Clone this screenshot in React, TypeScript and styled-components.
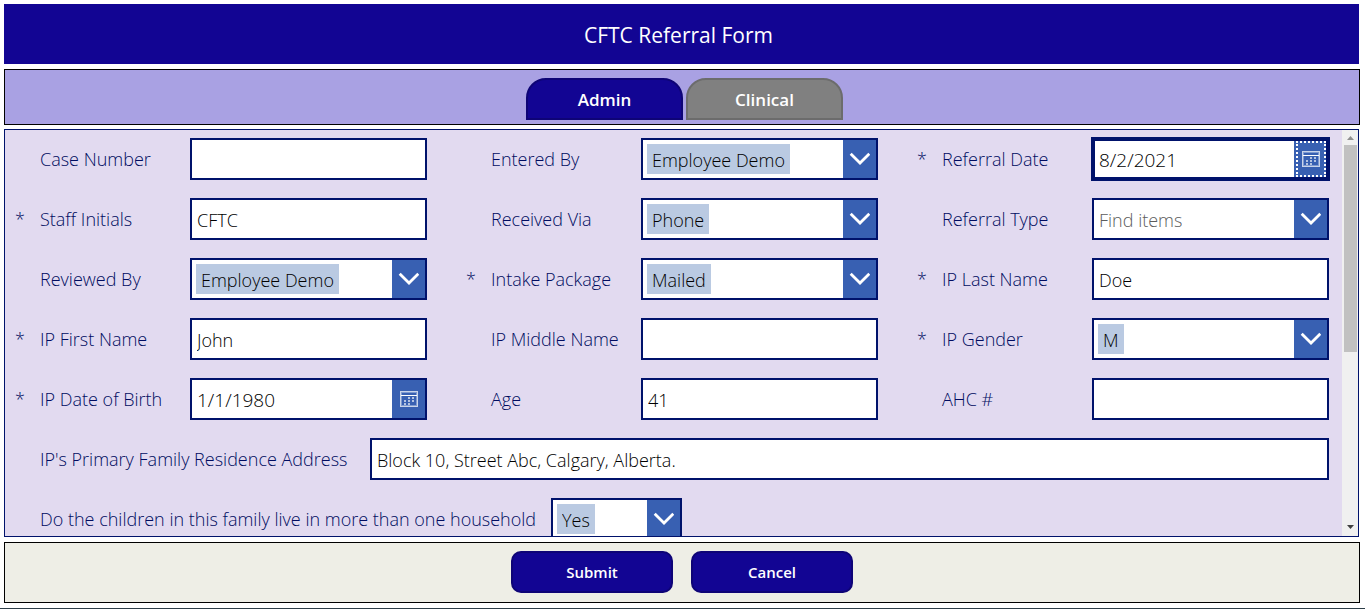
import React, { useId, useRef, useState } from "react";
import styled, { createGlobalStyle, css } from "styled-components";

const colors = {
  brand: "#120593",
  brandEdge: "#0e0476",
  navy: "#00126b",
  label: "#000c60",
  blue: "#3860b2",
  chip: "#bacae2",
  lavender: "#a9a1e3",
  panel: "#e2daf0",
  cream: "#eeeee6",
};

const GlobalStyle = createGlobalStyle`
  *, *::before, *::after { box-sizing: border-box; }
  body {
    margin: 0;
    background: #fff;
    font-family: "Open Sans", sans-serif;
  }
  button, input, select { font-family: inherit; }
`;

const Page = styled.div`
  display: flex;
  flex-direction: column;
  height: 100vh;
  padding-top: 4px;
  border-bottom: 1px solid #2c3d47;
`;

const Header = styled.header`
  flex: none;
  display: flex;
  align-items: center;
  justify-content: center;
  height: 60px;
  margin: 0 6px 5px 4px;
  padding: 2px 6px 0 0;
  background: ${colors.brand};
`;

const Title = styled.h1`
  margin: 0;
  color: #fff;
  font-size: 21px;
  font-weight: 400;
  line-height: 28px;
`;

const TabBar = styled.nav`
  flex: none;
  display: flex;
  justify-content: center;
  gap: 3px;
  height: 56px;
  margin: 0 5px 4px 4px;
  padding: 8px 0 0 5px;
  border: 1px solid #000;
  background: ${colors.lavender};
`;

const Tab = styled.button<{ $active: boolean }>`
  width: 157px;
  height: 42px;
  padding: 2px 0 0;
  border: 2px solid ${(p) => (p.$active ? colors.brandEdge : "#6c6c6c")};
  border-radius: 20px 20px 0 0;
  background: ${(p) => (p.$active ? colors.brand : "#808080")};
  color: #fff;
  font-size: 17px;
  font-weight: 600;
  line-height: 24px;
  cursor: pointer;
`;

const Panel = styled.main`
  flex: 1;
  display: flex;
  min-height: 0;
  margin: 0 6px 5px 4px;
  border: 1px solid ${colors.navy};
  background: ${colors.panel};
`;

const ScrollArea = styled.div`
  flex: 1;
  min-width: 0;
  overflow-y: auto;
  scrollbar-width: none;
`;

const Grid = styled.div`
  display: grid;
  grid-template-columns: repeat(3, minmax(0, 1fr));
  gap: 18px 39px;
  padding: 8px 13px 190px 10px;
`;

const Row = styled.div<{ $wide?: boolean }>`
  display: flex;
  align-items: center;
  height: 42px;
  ${(p) => p.$wide && css`grid-column: 1 / -1;`}
`;

const Star = styled.span`
  flex: none;
  width: 25px;
  color: ${colors.label};
  font-size: 18px;
  font-weight: 300;
  line-height: 24px;
`;

const Label = styled.label<{ $width: number }>`
  flex: none;
  width: ${(p) => p.$width}px;
  color: ${colors.label};
  font-size: 18px;
  font-weight: 300;
  line-height: 24px;
  white-space: nowrap;
`;

const Box = styled.div<{ $width?: number; $focused?: boolean }>`
  flex: ${(p) => (p.$width ? "none" : "1")};
  display: flex;
  align-items: center;
  min-width: 0;
  width: ${(p) => (p.$width ? `${p.$width}px` : "auto")};
  height: 42px;
  border: 2px solid ${colors.navy};
  background: #fff;
  ${(p) =>
    p.$focused &&
    css`
      border-width: 3px;
      box-shadow: 0 0 0 1px ${colors.navy};
    `}
`;

const TextInput = styled.input<{ $date?: boolean; $focused?: boolean }>`
  flex: 1;
  min-width: 0;
  height: 100%;
  padding: 2px ${(p) => (p.$focused ? 4 : 5)}px 0;
  border: 0;
  outline: 0;
  background: transparent;
  color: #000;
  font-size: ${(p) => (p.$date ? 19 : 18)}px;
  font-weight: 300;
`;

const SelectSlot = styled.div`
  flex: 1;
  display: flex;
  min-width: 0;
  padding-left: 4px;
`;

const Select = styled.select<{ $empty: boolean }>`
  appearance: none;
  field-sizing: content;
  height: 30px;
  padding: 2px ${(p) => (p.$empty ? 1 : 5)}px 0;
  border: 0;
  border-radius: 0;
  outline: 0;
  background: ${(p) => (p.$empty ? "transparent" : colors.chip)};
  color: ${(p) => (p.$empty ? "#5c5c5c" : "#000")};
  font-size: 18px;
  font-weight: 300;
`;

const Arrow = styled.span`
  flex: none;
  display: flex;
  align-items: center;
  justify-content: center;
  align-self: stretch;
  width: 33px;
  background: ${colors.blue};
  pointer-events: none;
`;

const CalendarButton = styled.button<{ $focused?: boolean }>`
  flex: none;
  display: flex;
  align-items: center;
  justify-content: center;
  align-self: stretch;
  width: 33px;
  padding: 0;
  border: 0;
  background: ${colors.blue};
  ${(p) =>
    p.$focused &&
    css`
      width: 30px;
      margin: 0 0 0 2px;
      border: 2px dotted #fff;
      box-shadow: -2px 0 0 ${colors.blue};
    `}
`;

const ScrollBar = styled.div`
  flex: none;
  display: flex;
  flex-direction: column;
  width: 16px;
  background: #f0f0f0;
`;

const ScrollButton = styled.button`
  flex: none;
  display: flex;
  align-items: center;
  justify-content: center;
  height: 15px;
  padding: 0;
  border: 0;
  background: transparent;
`;

const Track = styled.div`
  flex: 1;
  padding: 0 1px 0 2px;
`;

const Thumb = styled.div`
  height: 55%;
  background: #c1c1c1;
`;

const Footer = styled.footer`
  flex: none;
  display: flex;
  justify-content: center;
  gap: 18px;
  height: 61px;
  margin: 0 5px 5px 4px;
  padding-top: 8px;
  border: 1px solid #000;
  background: ${colors.cream};
`;

const ActionButton = styled.button`
  width: 162px;
  height: 42px;
  padding: 0;
  border: 2px solid ${colors.brandEdge};
  border-radius: 10px;
  background: ${colors.brand};
  color: #fff;
  font-size: 15px;
  font-weight: 600;
  line-height: 20px;
  cursor: pointer;
`;

const Chevron = () => (
  <svg width="21" height="14" viewBox="0 0 21 14" fill="none" aria-hidden="true">
    <path d="M1.7 1.7 11 11 20.3 1.7" stroke="#fff" strokeWidth="2.8" />
  </svg>
);

const CalendarIcon = () => (
  <svg width="18" height="16" viewBox="0 0 18 16" shapeRendering="crispEdges" aria-hidden="true">
    <path d="M0 0h18v16H0zM2 2v2h14V2zM2 6v8h14V6z" fill="#7f9ad0" fillRule="evenodd" />
    <path d="M0 0h18v16H0zM1 1v14h16V1z" fill="#c9d4ea" fillRule="evenodd" />
    <path d="M1 4h16v1H1z" fill="#fff" />
    <path d="M2 5h14v1H2z" fill={colors.blue} />
    <path
      d="M8 6h2v2H8zM12 6h2v2h-2zM4 9h2v2H4zM8 9h2v2H8zM12 9h2v2h-2zM4 12h2v2H4zM8 12h2v2H8z"
      fill="#b4c3e1"
    />
  </svg>
);

type FieldProps = {
  label: string;
  kind?: "text" | "date" | "select";
  value?: string;
  required?: boolean;
  focused?: boolean;
  wide?: boolean;
  labelWidth?: number;
  boxWidth?: number;
};

function Field({
  label,
  kind = "text",
  value = "",
  required,
  focused,
  wide,
  labelWidth = 150,
  boxWidth,
}: FieldProps) {
  const id = useId();
  return (
    <Row $wide={wide}>
      <Star aria-hidden="true">{required ? "*" : ""}</Star>
      <Label htmlFor={id} $width={labelWidth}>
        {label}
      </Label>
      <Box $width={boxWidth} $focused={focused}>
        {kind === "select" ? (
          <>
            <SelectSlot>
              <Select id={id} $empty={!value} defaultValue={value}>
                <option value={value}>{value || "Find items"}</option>
              </Select>
            </SelectSlot>
            <Arrow>
              <Chevron />
            </Arrow>
          </>
        ) : (
          <TextInput
            id={id}
            type="text"
            defaultValue={value}
            required={required}
            $date={kind === "date"}
            $focused={focused}
          />
        )}
        {kind === "date" && (
          <CalendarButton type="button" aria-label={`Pick ${label}`} $focused={focused}>
            <CalendarIcon />
          </CalendarButton>
        )}
      </Box>
    </Row>
  );
}

const fields: FieldProps[] = [
  { label: "Case Number" },
  { label: "Entered By", kind: "select", value: "Employee Demo" },
  { label: "Referral Date", kind: "date", value: "8/2/2021", required: true, focused: true },
  { label: "Staff Initials", value: "CFTC", required: true },
  { label: "Received Via", kind: "select", value: "Phone" },
  { label: "Referral Type", kind: "select" },
  { label: "Reviewed By", kind: "select", value: "Employee Demo" },
  { label: "Intake Package", kind: "select", value: "Mailed", required: true },
  { label: "IP Last Name", value: "Doe", required: true },
  { label: "IP First Name", value: "John", required: true },
  { label: "IP Middle Name" },
  { label: "IP Gender", kind: "select", value: "M", required: true },
  { label: "IP Date of Birth", kind: "date", value: "1/1/1980", required: true },
  { label: "Age", value: "41" },
  { label: "AHC #" },
  {
    label: "IP's Primary Family Residence Address",
    value: "Block 10, Street Abc, Calgary, Alberta.",
    wide: true,
    labelWidth: 330,
  },
  {
    label: "Do the children in this family live in more than one household",
    kind: "select",
    value: "Yes",
    wide: true,
    labelWidth: 511,
    boxWidth: 131,
  },
];

const tabs = ["Admin", "Clinical"];

export default function App() {
  const [active, setActive] = useState("Admin");
  const area = useRef<HTMLDivElement>(null);
  const scroll = (top: number) => area.current?.scrollBy({ top });

  return (
    <>
      <GlobalStyle />
      <Page>
        <Header>
          <Title>CFTC Referral Form</Title>
        </Header>
        <TabBar>
          {tabs.map((tab) => (
            <Tab key={tab} type="button" $active={tab === active} onClick={() => setActive(tab)}>
              {tab}
            </Tab>
          ))}
        </TabBar>
        <Panel>
          <ScrollArea ref={area}>
            <Grid>
              {fields.map((field) => (
                <Field key={field.label} {...field} />
              ))}
            </Grid>
          </ScrollArea>
          <ScrollBar>
            <ScrollButton type="button" aria-label="Scroll up" onClick={() => scroll(-60)}>
              <svg width="7" height="4" viewBox="0 0 7 4" aria-hidden="true">
                <path d="M0 4 3.5 0 7 4z" fill="#8f8f8f" />
              </svg>
            </ScrollButton>
            <Track>
              <Thumb />
            </Track>
            <ScrollButton type="button" aria-label="Scroll down" onClick={() => scroll(60)}>
              <svg width="7" height="8" viewBox="0 0 7 8" aria-hidden="true">
                <path d="M0 0h7L3.5 4z" fill="#404040" />
              </svg>
            </ScrollButton>
          </ScrollBar>
        </Panel>
        <Footer>
          <ActionButton type="submit">Submit</ActionButton>
          <ActionButton type="button">Cancel</ActionButton>
        </Footer>
      </Page>
    </>
  );
}
